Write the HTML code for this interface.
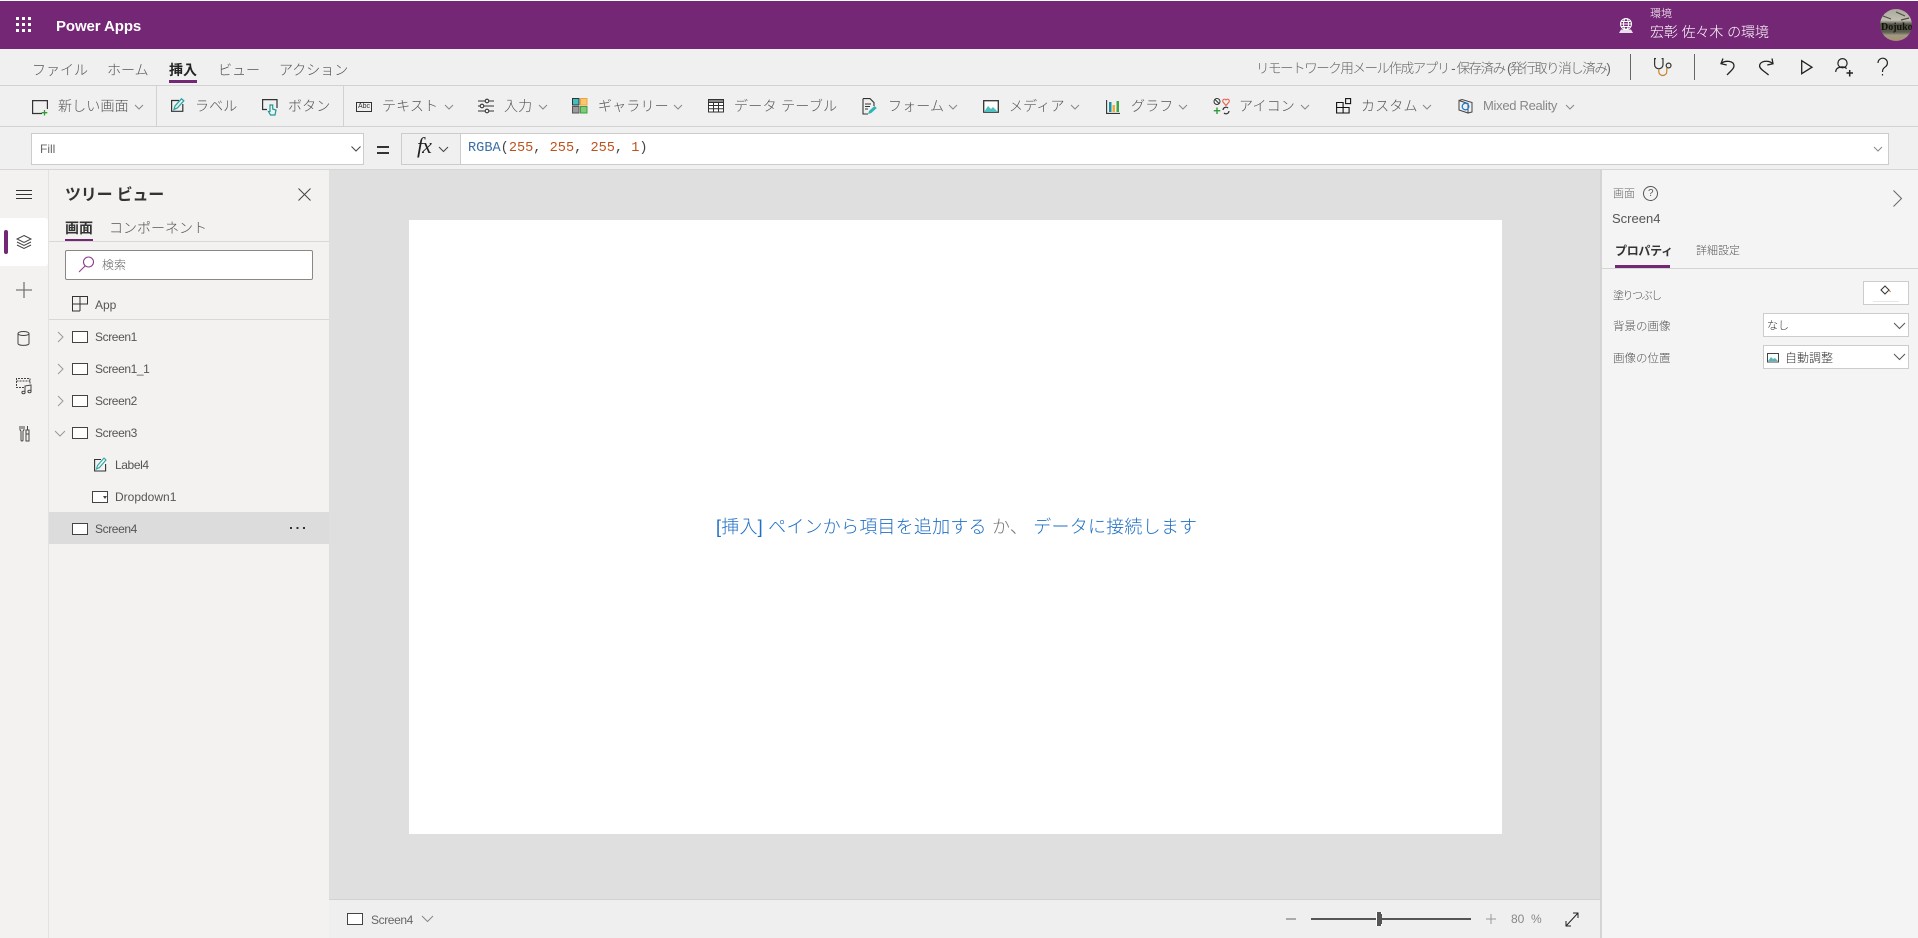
<!DOCTYPE html>
<html lang="ja"><head><meta charset="utf-8"><title>Power Apps</title>
<style>
html,body{margin:0;padding:0;width:1918px;height:938px;overflow:hidden;background:#fff;}
body{position:relative;font-family:"Liberation Sans","Noto Sans CJK JP",sans-serif;color:#555;font-size:14px;}
.b{position:absolute;box-sizing:border-box;}
.t{position:absolute;white-space:nowrap;line-height:20px;height:20px;color:#555;font-size:14px;font-weight:300;}
.s{font-size:12px;letter-spacing:-.4px;}
.tb{top:96px;letter-spacing:.15px;}
svg{position:absolute;overflow:visible;fill:none;}
</style></head><body>

<!-- backgrounds -->
<div class="b" style="left:0;top:1px;width:1918px;height:48px;background:#742774"></div>
<div class="b" style="left:0;top:49px;width:1918px;height:121px;background:#f0f0f0"></div>
<div class="b" style="left:0;top:85px;width:1918px;height:1px;background:#d2d2d2"></div>
<div class="b" style="left:0;top:126px;width:1918px;height:1px;background:#d2d2d2"></div>
<div class="b" style="left:0;top:169px;width:1918px;height:1px;background:#d6d6d6"></div>
<div class="b" style="left:156px;top:86px;width:1px;height:40px;background:#d2d2d2"></div>
<div class="b" style="left:343px;top:86px;width:1px;height:40px;background:#d2d2d2"></div>
<div class="b" style="left:0;top:170px;width:49px;height:768px;background:#f3f2f1;border-right:1px solid #e3e2e1"></div>
<div class="b" style="left:49px;top:170px;width:280px;height:768px;background:#f3f2f1"></div>
<div class="b" style="left:329px;top:170px;width:1271px;height:729px;background:#dfdfdf"></div>
<div class="b" style="left:329px;top:899px;width:1271px;height:39px;background:#efefef;border-top:1px solid #d2d2d2"></div>
<div class="b" style="left:1600px;top:170px;width:318px;height:768px;background:#f4f4f4;border-left:2px solid #d4d4d4"></div>
<div class="b" style="left:409px;top:220px;width:1093px;height:614px;background:#fff"></div>

<!-- top bar -->
<svg style="left:0;top:0" width="60" height="49"><g fill="#fff"><rect x="16" y="17" width="3" height="3"/><rect x="22" y="17" width="3" height="3"/><rect x="28" y="17" width="3" height="3"/><rect x="16" y="23" width="3" height="3"/><rect x="22" y="23" width="3" height="3"/><rect x="28" y="23" width="3" height="3"/><rect x="16" y="29" width="3" height="3"/><rect x="22" y="29" width="3" height="3"/><rect x="28" y="29" width="3" height="3"/></g></svg>
<span class="t" style="left:56px;top:17px;color:#fff;font-size:15px;font-weight:700;letter-spacing:-.1px">Power Apps</span>
<svg style="left:1618px;top:18px" width="16" height="16" stroke="#fff" stroke-width="1"><circle cx="8" cy="6" r="5.500"/><ellipse cx="8" cy="6" rx="2.500" ry="5.500"/><path d="M2.500 6h11M3.500 3.500h9M3.500 8.500h9"/><path d="M3 11.500h10l2 3.500H1z" fill="#fff" stroke="none" opacity=".85"/></svg>
<span class="t" style="left:1650px;top:4px;color:#fff;font-size:11px">環境</span>
<span class="t" style="left:1650px;top:22px;color:#fff;font-size:14px;letter-spacing:-.1px">宏彰 佐々木 の環境</span>
<svg style="left:1880px;top:9px" width="32" height="32"><defs><clipPath id="av"><circle cx="16" cy="16" r="16"/></clipPath><linearGradient id="ag" x1="0" y1="0" x2="0" y2="1"><stop offset="0" stop-color="#aaa99c"/><stop offset=".35" stop-color="#c2c0b2"/><stop offset=".48" stop-color="#4f4f44"/><stop offset=".72" stop-color="#5d5c4e"/><stop offset=".82" stop-color="#a09a85"/><stop offset="1" stop-color="#a8916f"/></linearGradient></defs><g clip-path="url(#av)"><rect width="32" height="32" fill="url(#ag)"/><path d="M3 7l8 3M16 3l9 4M21 11l8-2" stroke="#4c4c44" stroke-width="1.200"/><text x="1" y="21" font-family="Liberation Serif,serif" font-size="10" font-weight="700" fill="#14140e">Dojuko</text></g></svg>

<!-- menu -->
<span class="t" style="left:32px;top:60px">ファイル</span>
<span class="t" style="left:107px;top:60px">ホーム</span>
<span class="t" style="left:169px;top:60px;color:#222;font-weight:700">挿入</span>
<div class="b" style="left:169px;top:80px;width:28px;height:3px;background:#742774"></div>
<span class="t" style="left:218px;top:60px">ビュー</span>
<span class="t" style="left:279px;top:60px">アクション</span>
<span class="t" style="left:1256px;top:59px;font-size:13.5px;color:#666;letter-spacing:-1.45px">リモートワーク用メール作成アプリ - 保存済み (発行取り消し済み)</span>
<div class="b" style="left:1630px;top:54px;width:1px;height:26px;background:#666"></div>
<div class="b" style="left:1694px;top:54px;width:1px;height:26px;background:#666"></div>
<svg style="left:1654px;top:58px" width="19" height="19" stroke-width="1.200"><path d="M2 .6H.6v6a4.200 4.200 0 0 0 8.400 0v-6H7.600" stroke="#333"/><path d="M4.800 11v2.500a4 4 0 0 0 8 0V10" stroke="#c9822a"/><circle cx="14.600" cy="7.500" r="2.400" stroke="#333"/></svg>
<svg style="left:1720px;top:58px" width="15" height="18" stroke="#222" stroke-width="1.300"><path d="M3 .5L1 5.700l5.700 1.300"/><path d="M1 5.700C5 2 14 2.500 14 8c0 3-4 5.500-7 9"/></svg>
<svg style="left:1759px;top:58px" width="15" height="18" stroke="#222" stroke-width="1.300"><path d="M13 .5l1 5.200-5.700 1.300"/><path d="M14 5.700C9 1.500.6 3 .6 8c0 3 5 5.500 9 9"/></svg>
<svg style="left:1801px;top:60px" width="12" height="15" stroke="#222" stroke-width="1.300"><path d="M.7.700v13L11 7.200z"/></svg>
<svg style="left:1835px;top:58px" width="19" height="19" stroke="#222" stroke-width="1.200"><circle cx="7.500" cy="5.200" r="4.600"/><path d="M.7 14c0-5 7-6.500 11-3.500"/><path d="M11.500 15h6.500M14.700 12v6.500" stroke-width="1.500"/></svg>
<svg style="left:1877px;top:58px" width="12" height="19" stroke="#222" stroke-width="1.200"><path d="M1 5a4.700 4.700 0 1 1 7.500 3.700C6.500 10.200 5.500 11 5.500 14"/><path d="M5.500 16v1.500"/></svg>

<!-- toolbar -->
<svg style="left:32px;top:100px" width="17" height="16" stroke="#333" stroke-width="1.200"><path d="M10 13.500H.6V.6h14.800V9"/><path d="M12.500 10v5.500M9.700 12.700h5.600" stroke="#2e9b34" stroke-width="1.300"/></svg>
<span class="t tb" style="left:58px">新しい画面</span>
<svg style="left:134px;top:104px" width="10" height="6" stroke="#888"><path d="M1 1l4 4 4-4"/></svg>

<svg style="left:171px;top:98px" width="14" height="14"><path d="M8 2.500H.6v10.800h11.200V6" stroke="#333" stroke-width="1.200"/><path d="M3 11.500l1-3.500L10.500.8l2.300 2-6.500 7.200z" stroke="#2ba6a6" stroke-width="1.300"/></svg>
<span class="t tb" style="left:195px">ラベル</span>
<svg style="left:262px;top:99px" width="17" height="16"><path d="M5 10.500H.6V.6H15V9" stroke="#333" stroke-width="1.200"/><path d="M8 6v6.500H6.500L8.500 16h4.500l1-5-3.300-1V6z" stroke="#1f9a98" stroke-width="1.200" fill="#f0f0f0"/></svg>
<span class="t tb" style="left:288px">ボタン</span>

<svg style="left:356px;top:102px" width="16" height="10" stroke="#333"><rect x=".5" y=".5" width="15" height="9"/></svg>
<span class="t" style="left:358px;top:102px;font-size:7px;line-height:10px;height:10px;color:#333">Abc</span>
<span class="t tb" style="left:382px">テキスト</span>
<svg style="left:444px;top:104px" width="10" height="6" stroke="#888"><path d="M1 1l4 4 4-4"/></svg>

<svg style="left:478px;top:98px" width="16" height="16" stroke="#333" stroke-width="1.100"><path d="M0 3h7M11 3h5M0 8h2M6 8h10M0 13h7M11 13h5"/><circle cx="9" cy="3" r="1.800"/><circle cx="4" cy="8" r="1.800"/><circle cx="9" cy="13" r="1.800"/></svg>
<span class="t tb" style="left:504px">入力</span>
<svg style="left:538px;top:104px" width="10" height="6" stroke="#888"><path d="M1 1l4 4 4-4"/></svg>

<svg style="left:572px;top:98px" width="16" height="16"><rect x=".5" y=".5" width="6.500" height="6.500" fill="#3fc0c0" stroke="#333"/><rect x="8.500" y=".5" width="6.500" height="6.500" fill="#ffc56e" stroke="#e9a63f"/><rect x=".5" y="8.500" width="6.500" height="6.500" fill="#9b9b9b" stroke="#555"/><rect x="8.500" y="8.500" width="6.500" height="6.500" fill="#83c97d" stroke="#3d9f3d"/></svg>
<span class="t tb" style="left:598px">ギャラリー</span>
<svg style="left:673px;top:104px" width="10" height="6" stroke="#888"><path d="M1 1l4 4 4-4"/></svg>

<svg style="left:708px;top:99px" width="16" height="14" stroke="#333"><rect x=".5" y=".5" width="15" height="12.500" fill="#fff"/><rect x=".5" y=".5" width="15" height="3" fill="#8a8a8a"/><path d="M.5 6.500h15M.5 9.800h15M5.500 3.500V13M10.500 3.500V13"/></svg>
<span class="t" style="left:734px;top:96px;letter-spacing:.3px">データ テーブル</span>

<svg style="left:862px;top:98px" width="15" height="17"><path d="M1 .6h7l4 4V8M1 .6V16h5" stroke="#333" stroke-width="1.100"/><path d="M3 6h6M3 8.500h5M3 11h3" stroke="#333"/><path d="M6 16l1-3 5.500-5 2.300 2-5.500 5z" fill="#2fb4b4"/></svg>
<span class="t tb" style="left:888px">フォーム</span>
<svg style="left:948px;top:104px" width="10" height="6" stroke="#888"><path d="M1 1l4 4 4-4"/></svg>

<svg style="left:983px;top:100px" width="16" height="13"><rect x=".7" y=".7" width="14.600" height="11.500" fill="#fff" stroke="#333" stroke-width="1.300"/><path d="M1 12l4-6 3 3 2-2 5 5z" fill="#4fc0c0"/></svg>
<span class="t tb" style="left:1009px">メディア</span>
<svg style="left:1070px;top:104px" width="10" height="6" stroke="#888"><path d="M1 1l4 4 4-4"/></svg>

<svg style="left:1106px;top:100px" width="15" height="14"><path d="M.6 0v13.400H14" stroke="#333" stroke-width="1.100"/><rect x="3" y="2" width="2.500" height="10" fill="#1c8fa3"/><rect x="6.500" y="5" width="2.500" height="7" fill="#f2a93b"/><rect x="10.500" y="1" width="2.500" height="11" fill="#3fa54a"/></svg>
<span class="t tb" style="left:1131px">グラフ</span>
<svg style="left:1178px;top:104px" width="10" height="6" stroke="#888"><path d="M1 1l4 4 4-4"/></svg>

<svg style="left:1213px;top:98px" width="17" height="17"><circle cx="4" cy="3.500" r="3" stroke="#333"/><path d="M2 1.500l4 4" stroke="#333"/><path d="M13 7.500L10 4a1.800 1.800 0 0 1 3-2 1.800 1.800 0 0 1 3 2z" stroke="#e8604c" stroke-width="1.100"/><path d="M4 9.500v6.500M.8 12.700h6.500" stroke="#2e9b34" stroke-width="1.400"/><path d="M10 12a3 3 0 0 1 5-2M16 13a3 3 0 0 1-5 2" stroke="#333" stroke-width="1.200"/></svg>
<span class="t tb" style="left:1239px">アイコン</span>
<svg style="left:1300px;top:104px" width="10" height="6" stroke="#888"><path d="M1 1l4 4 4-4"/></svg>

<svg style="left:1336px;top:98px" width="16" height="16" stroke="#111" stroke-width="1.100"><path d="M.6 4.500h6.500v5H.6zM7.100 9.500h6v5.500h-6zM.6 9.500h6.500V15H.6z"/><rect x="9.600" y=".6" width="5" height="5"/></svg>
<span class="t tb" style="left:1361px">カスタム</span>
<svg style="left:1422px;top:104px" width="10" height="6" stroke="#888"><path d="M1 1l4 4 4-4"/></svg>

<svg style="left:1458px;top:99px" width="15" height="15" stroke-width="1"><path d="M1 1.500l9 3v9.500L1 11z" stroke="#444"/><path d="M1 1.500l3-1 10 3v9.500l-4 1" stroke="#444"/><circle cx="7.500" cy="7.500" r="3.300" stroke="#1d7fcf" stroke-width="1.300"/></svg>
<span class="t" style="left:1483px;top:96px;font-size:13px;color:#888;letter-spacing:-.3px">Mixed Reality</span>
<svg style="left:1565px;top:104px" width="10" height="6" stroke="#888"><path d="M1 1l4 4 4-4"/></svg>

<!-- formula bar -->
<div class="b" style="left:31px;top:133px;width:333px;height:32px;background:#fff;border:1px solid #ccc"></div>
<span class="t" style="left:40px;top:139px;font-size:12px;color:#666">Fill</span>
<svg style="left:351px;top:146px" width="10" height="6" stroke="#444"><path d="M.5.500l4.500 4.500 4.500-4.500"/></svg>
<div class="b" style="left:377px;top:146px;width:12px;height:2px;background:#333"></div>
<div class="b" style="left:377px;top:152px;width:12px;height:2px;background:#333"></div>
<div class="b" style="left:401px;top:133px;width:60px;height:32px;background:#f0f0f0;border:1px solid #ccc"></div>
<span class="t" style="left:417px;top:136px;font-family:'Liberation Serif',serif;font-style:italic;font-size:22px;color:#222;letter-spacing:-1px">fx</span>
<svg style="left:438px;top:146px" width="11" height="7" stroke="#444"><path d="M1 1l4.500 4.500L10 1"/></svg>
<div class="b" style="left:461px;top:133px;width:1428px;height:32px;background:#fff;border:1px solid #ccc;border-left:0"></div>
<span class="t" style="left:468px;top:139px;font-family:'Liberation Mono',monospace;font-size:13.6px;color:#444;font-weight:400"><span style="color:#3a6ea5">RGBA</span>(<span style="color:#c0501a">255</span>, <span style="color:#c0501a">255</span>, <span style="color:#c0501a">255</span>, <span style="color:#c0501a">1</span>)</span>
<svg style="left:1873px;top:146px" width="10" height="6" stroke="#888"><path d="M1 1l4 4 4-4"/></svg>

<!-- left rail -->
<svg style="left:16px;top:190px" width="17" height="10" stroke="#333"><path d="M0 .5h16M0 4.500h16M0 8.500h16"/></svg>
<div class="b" style="left:0;top:218px;width:48px;height:48px;background:#fff;border-radius:0 3px 3px 0"></div>
<div class="b" style="left:4px;top:230px;width:4px;height:24px;background:#742774;border-radius:2px"></div>
<svg style="left:16px;top:235px" width="16" height="15" stroke="#444"><path d="M8 .5l7 3.500-7 3.500L1 4z"/><path d="M1 7l7 3.500L15 7M1 10l7 3.500L15 10"/></svg>
<svg style="left:16px;top:282px" width="16" height="16" stroke="#777" stroke-width="1.300"><path d="M8 0v16M0 8h16"/></svg>
<svg style="left:17px;top:331px" width="14" height="16" stroke="#444"><ellipse cx="6.500" cy="2.500" rx="5.500" ry="2"/><path d="M1 2.500v10c0 2.500 11 2.500 11 0v-10"/></svg>
<svg style="left:16px;top:378px" width="17" height="17" stroke="#444"><path d="M8 9.500H.5V.5H14v5M.5 3H14" stroke-dasharray="2 1"/><path d="M9 14V8l6-1v6"/><ellipse cx="7.500" cy="14.500" rx="1.600" ry="1.200"/><ellipse cx="13.500" cy="13.500" rx="1.600" ry="1.200"/></svg>
<svg style="left:19px;top:426px" width="11" height="17" stroke="#444"><path d="M1 0v3a2 2 0 0 0 1 2v9a1 1 0 0 0 2 0V5a2 2 0 0 0 1-2V0M3 0v3"/><rect x="7" y="4" width="3" height="11"/><path d="M8.500 0v4M7 8h3"/></svg>

<!-- tree panel -->
<span class="t" style="left:65px;top:186px;font-size:16px;color:#333;font-weight:700;letter-spacing:-.2px">ツリー ビュー</span>
<svg style="left:298px;top:188px" width="13" height="13" stroke="#444"><path d="M.5.500l12 12M12.500.500l-12 12"/></svg>
<span class="t" style="left:65px;top:218px;color:#333;font-weight:700">画面</span>
<span class="t" style="left:109px;top:218px">コンポーネント</span>
<div class="b" style="left:65px;top:239px;width:28px;height:2px;background:#742774"></div>
<div class="b" style="left:49px;top:241px;width:280px;height:1px;background:#d8d8d8"></div>
<div class="b" style="left:65px;top:250px;width:248px;height:30px;background:#fff;border:1px solid #8a8886;border-radius:2px"></div>
<svg style="left:78px;top:256px" width="17" height="17" stroke="#8f3c8f" stroke-width="1.100"><circle cx="10.500" cy="6" r="5"/><path d="M7 10l-6 6"/></svg>
<span class="t" style="left:102px;top:255px;font-size:12px;color:#666">検索</span>
<svg style="left:72px;top:296px" width="16" height="16" stroke="#333"><path d="M.5.500h15v7.500H.5zM8 .5v14.500M.5 8v7h7.500"/></svg>
<span class="t" style="left:95px;top:295px;font-size:12px">App</span>
<div class="b" style="left:49px;top:319px;width:280px;height:1px;background:#d8d8d8"></div>

<svg style="left:57px;top:331px" width="8" height="12" stroke="#999"><path d="M1 1l5 5-5 5"/></svg>
<div class="b" style="left:72px;top:331px;width:16px;height:12px;background:#fff;border:1px solid #444"></div>
<span class="t s" style="left:95px;top:327px">Screen1</span>
<svg style="left:57px;top:363px" width="8" height="12" stroke="#999"><path d="M1 1l5 5-5 5"/></svg>
<div class="b" style="left:72px;top:363px;width:16px;height:12px;background:#fff;border:1px solid #444"></div>
<span class="t s" style="left:95px;top:359px">Screen1_1</span>
<svg style="left:57px;top:395px" width="8" height="12" stroke="#999"><path d="M1 1l5 5-5 5"/></svg>
<div class="b" style="left:72px;top:395px;width:16px;height:12px;background:#fff;border:1px solid #444"></div>
<span class="t s" style="left:95px;top:391px">Screen2</span>
<svg style="left:54px;top:430px" width="12" height="8" stroke="#999"><path d="M1 1l5 5 5-5"/></svg>
<div class="b" style="left:72px;top:427px;width:16px;height:12px;background:#fff;border:1px solid #444"></div>
<span class="t s" style="left:95px;top:423px">Screen3</span>
<svg style="left:94px;top:457px" width="14" height="15"><path d="M7 2.500H.6V14h11V7" stroke="#333" stroke-width="1.100"/><path d="M2.500 12l1-3.500L10 1l2 2-6.500 7.500z" stroke="#2ba6a6" stroke-width="1.100"/></svg>
<span class="t s" style="left:115px;top:455px">Label4</span>
<div class="b" style="left:92px;top:491px;width:16px;height:12px;background:#fff;border:1px solid #444"></div>
<div class="b" style="left:103px;top:496px;width:0;height:0;border:2px solid transparent;border-top:3px solid #444"></div>
<span class="t" style="left:115px;top:487px;font-size:12px">Dropdown1</span>
<div class="b" style="left:49px;top:512px;width:280px;height:32px;background:#dcdcdc"></div>
<div class="b" style="left:72px;top:523px;width:16px;height:12px;background:#fff;border:1px solid #444"></div>
<span class="t s" style="left:95px;top:519px">Screen4</span>
<svg style="left:290px;top:527px" width="16" height="3"><g fill="#333"><rect width="2" height="2"/><rect x="6.500" width="2" height="2"/><rect x="13" width="2" height="2"/></g></svg>

<!-- canvas text -->
<span class="t" style="left:716px;top:517px;font-size:18px;color:#1f6fc4;letter-spacing:.22px">[挿入] ペインから項目を追加する <span style="color:#777">か、</span> データに接続します</span>

<!-- bottom bar -->
<div class="b" style="left:347px;top:913px;width:16px;height:12px;background:#fff;border:1px solid #444"></div>
<span class="t s" style="left:371px;top:910px;color:#666">Screen4</span>
<svg style="left:421px;top:915px" width="13" height="8" stroke="#888"><path d="M1 1l5.500 5.500L12 1"/></svg>
<div class="b" style="left:1286px;top:918px;width:10px;height:2px;background:#aaa"></div>
<div class="b" style="left:1311px;top:918px;width:160px;height:2px;background:#555"></div>
<div class="b" style="left:1376px;top:912px;width:4px;height:14px;background:#555;border:1px solid #fff;box-sizing:content-box;border-width:0 1px"></div>
<div class="b" style="left:1380px;top:914px;width:2px;height:10px;background:#555"></div>
<svg style="left:1486px;top:914px" width="10" height="10" stroke="#999"><path d="M5 0v10M0 5h10"/></svg>
<span class="t" style="left:1511px;top:909px;font-size:12px;color:#888">80</span>
<span class="t" style="left:1531px;top:909px;font-size:12px;color:#888">%</span>
<svg style="left:1565px;top:912px" width="14" height="15" stroke="#222"><path d="M1 14L13 1M8 1h5v5M1 9v5h5"/></svg>

<!-- right panel -->
<span class="t" style="left:1613px;top:184px;font-size:11px;color:#666">画面</span>
<svg style="left:1643px;top:186px" width="15" height="15" stroke="#555"><circle cx="7.500" cy="7.500" r="7"/></svg>
<span class="t" style="left:1648px;top:184px;font-size:10px;color:#555">?</span>
<svg style="left:1893px;top:190px" width="9" height="17" stroke="#666"><path d="M.5.500l8 8-8 8"/></svg>
<span class="t" style="left:1612px;top:209px;font-size:13px;color:#555">Screen4</span>
<span class="t" style="left:1615px;top:241px;font-size:12px;color:#333;font-weight:700;letter-spacing:-.3px">プロパティ</span>
<span class="t" style="left:1696px;top:241px;font-size:11px;color:#555">詳細設定</span>
<div class="b" style="left:1615px;top:265px;width:55px;height:3px;background:#742774"></div>
<div class="b" style="left:1602px;top:268px;width:316px;height:1px;background:#d4d4d4"></div>
<span class="t" style="left:1613px;top:286px;font-size:11px;letter-spacing:-1.500px">塗りつぶし</span>
<div class="b" style="left:1863px;top:281px;width:46px;height:24px;background:#fff;border:1px solid #ccc"></div>
<svg style="left:1880px;top:285px" width="12" height="11" stroke="#333"><path d="M1 5l4-4 4 4-4 4zM3 3l2-2"/><path d="M9 5l1.500 2" stroke="#b07030"/></svg>
<div class="b" style="left:1873px;top:301px;width:26px;height:1px;background:#e6e6e6"></div>
<span class="t" style="left:1613px;top:317px;font-size:11.5px">背景の画像</span>
<div class="b" style="left:1763px;top:313px;width:146px;height:24px;background:#fff;border:1px solid #ccc"></div>
<span class="t" style="left:1767px;top:316px;font-size:11px;color:#333">なし</span>
<svg style="left:1893px;top:322px" width="13" height="8" stroke="#555"><path d="M1 1l5.500 5.500L12 1"/></svg>
<span class="t" style="left:1613px;top:349px;font-size:11.5px">画像の位置</span>
<div class="b" style="left:1763px;top:345px;width:146px;height:24px;background:#fff;border:1px solid #ccc"></div>
<svg style="left:1767px;top:353px" width="12" height="10"><rect x=".5" y=".5" width="11" height="8.500" stroke="#444" fill="#fff"/><path d="M1 8l3-4 2 2 2-1 3 3z" fill="#4fb9b9"/></svg>
<span class="t" style="left:1785px;top:348px;font-size:12px;color:#333">自動調整</span>
<svg style="left:1893px;top:353px" width="13" height="8" stroke="#555"><path d="M1 1l5.500 5.500L12 1"/></svg>

</body></html>
